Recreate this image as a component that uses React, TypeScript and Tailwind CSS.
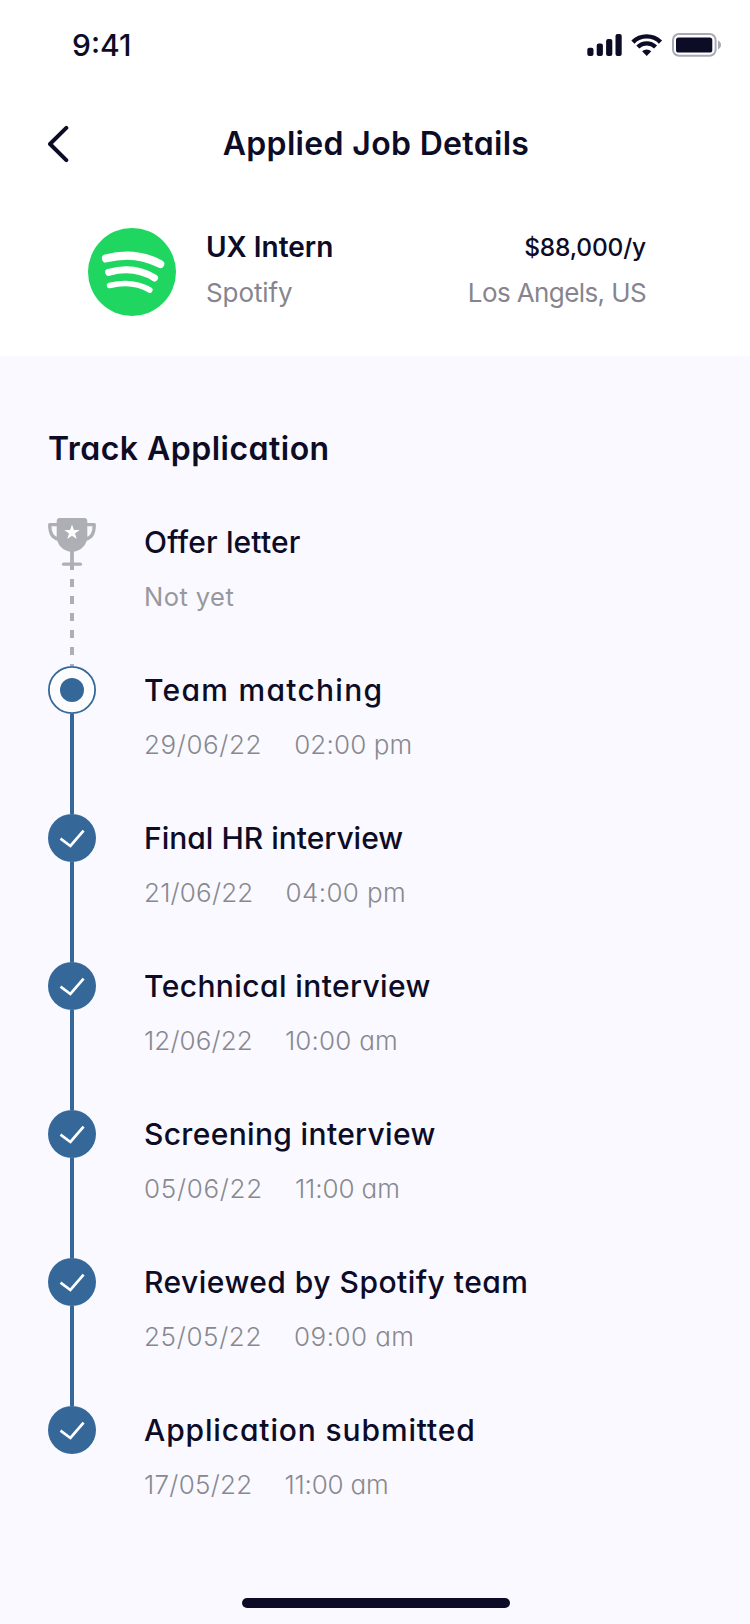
import React from "react";

const INK = "#0d0c26";

type Step = {
  title: string;
  titleClass: string;
  date: string;
  dateClass: string;
  time?: string;
  timeClass?: string;
  state: "pending" | "current" | "done";
};

const steps: Step[] = [
  { title: "Offer letter", titleClass: "tracking-[0.15px]", date: "Not yet", dateClass: "tracking-[0.45px]", state: "pending" },
  { title: "Team matching", titleClass: "tracking-[1.28px]", date: "29/06/22", dateClass: "tracking-[0.6px]", time: "02:00 pm", timeClass: "tracking-[0.15px]", state: "current" },
  { title: "Final HR interview", titleClass: "tracking-[0px]", date: "21/06/22", dateClass: "tracking-[0.2px]", time: "04:00 pm", timeClass: "tracking-[0.38px]", state: "done" },
  { title: "Technical interview", titleClass: "tracking-[0.4px]", date: "12/06/22", dateClass: "tracking-[0.12px]", time: "10:00 am", timeClass: "tracking-[0.2px]", state: "done" },
  { title: "Screening interview", titleClass: "tracking-[0.34px]", date: "05/06/22", dateClass: "tracking-[0.72px]", time: "11:00 am", timeClass: "tracking-[-0.1px]", state: "done" },
  { title: "Reviewed by Spotify team", titleClass: "tracking-[0.48px]", date: "25/05/22", dateClass: "tracking-[0.65px]", time: "09:00 am", timeClass: "tracking-[0.45px]", state: "done" },
  { title: "Application submitted", titleClass: "tracking-[0.86px]", date: "17/05/22", dateClass: "tracking-[0.28px]", time: "11:00 am", timeClass: "tracking-[-0.22px]", state: "done" },
];

function StatusIcons() {
  return (
    <svg width="136" height="26" viewBox="586 33 136 26" fill="none">
      <g fill={INK}>
        <rect x="587.3" y="48.7" width="6.2" height="8.3" rx="2" />
        <rect x="596.7" y="44.4" width="6.2" height="12.6" rx="2" />
        <rect x="606.1" y="40" width="6.2" height="17" rx="2" />
        <rect x="615.5" y="35" width="6.2" height="22" rx="2" />
        <path d="M646.7 57l-4.6-4.7a6.6 6.6 0 0 1 9.2 0z" />
      </g>
      <path d="M632.9 43.1a19.6 19.6 0 0 1 27.6 0" stroke={INK} strokeWidth="4.4" />
      <path d="M637.8 48a12.7 12.7 0 0 1 17.8 0" stroke={INK} strokeWidth="4.2" />
      <rect x="673" y="35" width="42.6" height="21.8" rx="6" stroke="#a9a8b5" strokeWidth="2" />
      <rect x="676" y="38.4" width="36.3" height="15.2" rx="2.6" fill={INK} />
      <path d="M718 41.6c2 .9 3 2.4 3 4.3s-1 3.4-3 4.3z" fill="#a9a8b5" />
    </svg>
  );
}

function SpotifyLogo() {
  return (
    <svg width="88" height="88" viewBox="0 0 88 88" fill="none" className="shrink-0">
      <circle cx="44" cy="44" r="44" fill="#1fd760" />
      <g stroke="#fff" strokeLinecap="round">
        <path d="M18 30.4Q47 22.6 72.2 36" strokeWidth="8.2" />
        <path d="M20.6 44.4Q46 37.2 66.6 50" strokeWidth="6.9" />
        <path d="M21.6 57.5Q44.5 51.8 61.8 62" strokeWidth="5.6" />
      </g>
    </svg>
  );
}

function Trophy() {
  return (
    <svg width="48" height="48" viewBox="0 0 48 48" fill="none" className="shrink-0">
      <path d="M11.7 0H36.3a3 3 0 0 1 3 3V18.5a15.3 15.3 0 0 1-30.6 0V3a3 3 0 0 1 3-3z" fill="#aeafb4" />
      <path d="M9.5 6.6H1.7c0 8 3 13.7 8.7 14.6M38.5 6.6h7.8c0 8-3 13.7-8.7 14.6" stroke="#aeafb4" strokeWidth="3.3" strokeLinejoin="round" />
      <path d="M24 33v15" stroke="#aeafb4" strokeWidth="3.8" />
      <path d="M15.6 46.2h16.8" stroke="#aeafb4" strokeWidth="3.3" strokeLinecap="round" />
      <path d="M24 6.5l1.9 5.5 5.7.1-4.6 3.5 1.7 5.5L24 17.8l-4.7 3.3 1.7-5.5-4.6-3.5 5.7-.1z" fill="#fff" />
    </svg>
  );
}

function Marker({ state }: { state: Step["state"] }) {
  if (state === "pending") return <Trophy />;
  if (state === "current") {
    return (
      <svg width="48" height="48" viewBox="0 0 48 48" fill="none" className="shrink-0">
        <circle cx="24" cy="24" r="23.1" fill="#fdfdff" stroke="#356899" strokeWidth="1.8" />
        <circle cx="24" cy="24" r="12" fill="#356899" />
      </svg>
    );
  }
  return (
    <svg width="48" height="48" viewBox="0 0 48 48" fill="none" className="shrink-0">
      <circle cx="24" cy="24" r="24" fill="#356899" />
      <path d="M12.5 24.7l9.9 7.3L35.6 16.7" stroke="#fff" strokeWidth="2.7" />
    </svg>
  );
}

export default function App() {
  return (
    <main className="flex h-[1624px] w-[750px] flex-col overflow-hidden bg-white font-['Inter',sans-serif] text-[#0d0c26] [font-feature-settings:'cv11'] whitespace-nowrap">
      <div className="flex h-[90px] items-center justify-between pr-7 pl-18">
        <span className="text-[30px] leading-[37px] font-medium">9:41</span>
        <StatusIcons />
      </div>
      <header className="grid h-[106px] grid-cols-[1fr_auto_1fr] items-center pr-[46px] pl-12">
        <svg width="22" height="40" viewBox="0 0 22 40" fill="none" className="mt-0.5">
          <path d="M18.3 3.9L2 20l16.3 16.2" stroke={INK} strokeWidth="4" strokeLinecap="round" strokeLinejoin="round" />
        </svg>
        <h1 className="pt-0.5 text-[32px] font-semibold tracking-[0.33px]">Applied Job Details</h1>
      </header>
      <section className="flex h-40 items-start pt-8 pr-26 pl-22">
        <SpotifyLogo />
        <div className="ml-[30px] flex flex-col pt-px">
          <span className="h-9 text-[28px] leading-9 font-semibold">UX Intern</span>
          <span className="mt-2.5 h-9 text-[26px] leading-9 tracking-[-0.1px] text-[#86858f]">Spotify</span>
        </div>
        <div className="ml-auto flex flex-col items-end pt-px">
          <span className="h-9 text-[24.5px] leading-[37px] font-medium tracking-[-0.18px]">$88,000/y</span>
          <span className="mt-2.5 h-9 text-[26px] leading-9 tracking-[-0.6px] text-[#86858f]">Los Angels, US</span>
        </div>
      </section>
      <section className="flex grow flex-col bg-[#faf9ff] px-12 pt-[69px]">
        <h2 className="h-[93px] text-[32px] leading-[47px] font-semibold tracking-[0.48px]">Track Application</h2>
        <ol>
          {steps.map((s, i) => (
            <li key={s.title} className="flex h-[148px]">
              <div className="flex w-12 flex-col items-center">
                <Marker state={s.state} />
                {s.state === "pending" ? (
                  <svg width="4" height="100" viewBox="0 0 4 100">
                    <path d="M2 0v100" stroke="#aeafb4" strokeWidth="4" strokeDasharray="8 9" strokeDashoffset="4" />
                  </svg>
                ) : (
                  i < steps.length - 1 && <div className="w-1 grow bg-[#356899]" />
                )}
              </div>
              <div className="ml-12 flex flex-col">
                <h3 className={"h-[47px] text-[30px] leading-[48px] font-medium " + s.titleClass}>{s.title}</h3>
                <p className={"flex h-[63px] items-center gap-8 " + (s.time ? "text-[26px] font-light text-[#888990]" : "pt-px text-[25.5px] text-[#97989e]")}>
                  <span className={s.dateClass}>{s.date}</span>
                  {s.time && <span className={s.timeClass}>{s.time}</span>}
                </p>
              </div>
            </li>
          ))}
        </ol>
        <div className="mt-auto mb-4 ml-[194px] h-2.5 w-[268px] rounded-full bg-[#0d0c26]" />
      </section>
    </main>
  );
}
